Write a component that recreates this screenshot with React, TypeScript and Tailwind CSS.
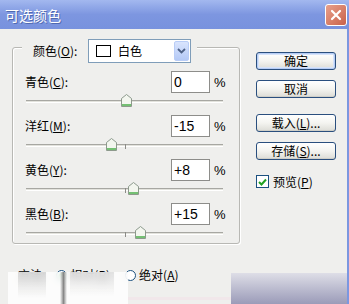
import React from 'react';

const cjk = "font-['Noto_Sans_CJK_SC','Noto_Sans',sans-serif]";

const Mn = ({ k }: { k: string }) => <span className="underline underline-offset-[1px]">{k}</span>;

const rows = [
  { name: '青色', key: 'C', value: 0 },
  { name: '洋红', key: 'M', value: -15 },
  { name: '黄色', key: 'Y', value: 8 },
  { name: '黑色', key: 'B', value: 15 },
];

const Thumb = () => (
  <svg width="11" height="13" viewBox="0 0 11 13" className="block">
    <path d="M0.5 4.5 L5.5 0.5 L10.5 4.5 L10.5 12.5 L0.5 12.5 Z" fill="#f3f6ef" stroke="#8d9a8c" />
    <path d="M1 11 H10" stroke="#4aae4a" strokeWidth="1.5" />
  </svg>
);

const Slider = ({ value }: { value: number }) => (
  <div className="relative ml-[13px] mr-[16px] mt-[7px] h-[3px] border-t border-[#a7a7a2] border-b border-b-white bg-[#e2e2dc]">
    <div className="absolute left-[99px] top-[-1px] w-px h-[5px] bg-[#8c8c88]" />
    <div className="absolute top-[-7px]" style={{ left: 100 + value * 0.98 - 5.5 }}>
      <Thumb />
    </div>
  </div>
);

const XpButton = ({ children, primary }: { children: React.ReactNode; primary?: boolean }) => (
  <div
    className={`w-[80px] h-[18px] rounded-[3px] border border-[#2a4f7e] bg-linear-to-b from-white via-[#f4f4f0] to-[#dcdcd6] flex items-center justify-center text-[12px] text-black leading-none ${
      primary ? 'shadow-[inset_0_0_0_1px_#b6cdf5,inset_0_0_0_2px_#d6e3f9]' : 'shadow-[inset_0_-1px_0_#cfcfc8]'
    }`}
  >
    {children}
  </div>
);

export default function App() {
  return (
    <div className={`relative w-[349px] h-[304px] overflow-hidden bg-[#efefed] flex flex-col ${cjk} text-[12px] text-black`}>
      {/* title bar */}
      <div className="h-[29px] flex items-center pl-[5px] pr-[2px] bg-linear-to-b from-[#a3b8ef] via-[#7d96e0] to-[#7892de]">
        <span className="text-[14px] text-white leading-none [text-shadow:1px_1px_0_#5069b0]">可选颜色</span>
        <div className="ml-auto w-[22px] h-[22px] rounded-[3px] border border-white bg-linear-to-br from-[#e7a08c] to-[#c9614a] flex items-center justify-center">
          <svg width="12" height="12" viewBox="0 0 12 12">
            <path d="M2 2 L10 10 M10 2 L2 10" stroke="#fff" strokeWidth="2.2" strokeLinecap="round" />
          </svg>
        </div>
      </div>

      <div className="flex flex-1 border-r-2 border-[#7c97e0]">
        {/* left column */}
        <div className="w-[240px] pl-[12px] pt-[18px] flex flex-col">
          <div className="h-[197px] border border-[#b8b8b4] rounded-[3px] shadow-[1px_1px_0_#fff,inset_1px_1px_0_#fff]">
            <div className="-mt-[9px] ml-[9px] w-fit h-[24px] flex items-center pl-[11px] pr-[6px] bg-[#efefed]">
              <span className="w-[55px] leading-none">颜色(<Mn k="O" />):</span>
              <div className="w-[103px] h-[24px] border border-[#7f9db9] bg-white flex items-center pl-[7px] pr-px">
                <div className="w-[15px] h-[12px] border border-black bg-white" />
                <span className="ml-[7px] leading-none">白色</span>
                <div className="ml-auto w-[15px] h-[20px] rounded-[2px] bg-linear-to-b from-[#d9e4fd] to-[#b4c9f6] border border-[#b9cdf7] flex items-center justify-center">
                  <svg width="9" height="6" viewBox="0 0 9 6">
                    <path d="M1 1 L4.5 4.5 L8 1" fill="none" stroke="#4d6185" strokeWidth="1.8" />
                  </svg>
                </div>
              </div>
            </div>

            <div className="mt-[8px] flex flex-col">
              {rows.map((r) => (
                <div key={r.key} className="h-[44px] flex flex-col">
                  <div className="h-[22px] flex items-center pl-[12px] pr-[12px]">
                    <span className="leading-none">
                      {r.name}(<Mn k={r.key} />):
                    </span>
                    <div className="ml-auto w-[39px] h-[22px] border border-[#8d8d8a] bg-white flex items-center pl-[2px] font-['Liberation_Sans',sans-serif] text-[14px] leading-none">
                      {r.value > 0 ? `+${r.value}` : `${r.value}`}
                    </div>
                    <span className="w-[17px] pl-[4px] text-[13px] leading-none font-['Liberation_Sans',sans-serif]">%</span>
                  </div>
                  <Slider value={r.value} />
                </div>
              ))}
            </div>
          </div>

          <div className="mt-[23px] h-[16px] flex items-center pl-[6px] leading-none">
            <span>方法:</span>
            <div className="ml-[11px] w-[11px] h-[11px] rounded-full border border-[#1c5180] bg-white flex items-center justify-center">
              <div className="w-[5px] h-[5px] rounded-full bg-[#2b9a2b]" />
            </div>
            <span className="ml-[3px]">相对(<Mn k="R" />)</span>
            <div className="ml-[15px] w-[11px] h-[11px] rounded-full border border-[#1c5180] bg-white" />
            <span className="ml-[3px]">绝对(<Mn k="A" />)</span>
          </div>
        </div>

        {/* right column */}
        <div className="pl-[16px] pt-[23px] flex flex-col">
          <XpButton primary>确定</XpButton>
          <div className="mt-[10px]">
            <XpButton>取消</XpButton>
          </div>
          <div className="mt-[16px]">
            <XpButton>
              载入(<Mn k="L" />)...
            </XpButton>
          </div>
          <div className="mt-[10px]">
            <XpButton>
              存储(<Mn k="S" />)...
            </XpButton>
          </div>
          <div className="mt-[15px] flex items-center">
            <div className="w-[13px] h-[13px] border border-[#1c5180] bg-white flex items-center justify-center">
              <svg width="9" height="8" viewBox="0 0 9 8">
                <path d="M1 4 L3.5 6.5 L8 1.5" fill="none" stroke="#21a121" strokeWidth="2" />
              </svg>
            </div>
            <span className="ml-[4px] leading-none">预览(<Mn k="P" />)</span>
          </div>
        </div>
      </div>

      {/* smeared regions over the bottom of the shot */}
      <div className="absolute left-[8px] top-[272px] w-[120px] h-[32px] bg-white/80 backdrop-blur-[3px] overflow-hidden">
        <div className="absolute left-[10px] top-0 w-[28px] h-[26px] bg-linear-to-b from-[#c8c8c8]/70 to-transparent" />
        <div className="absolute left-[52px] top-0 w-[7px] h-[32px] bg-linear-to-r from-transparent via-[#6a6a6a]/80 to-transparent" />
        <div className="absolute left-[62px] top-0 w-[44px] h-[24px] bg-linear-to-b from-[#d0d0d0]/60 to-transparent" />
      </div>
      <div className="absolute left-[128px] top-[297px] w-[103px] h-[3px] bg-[#f1e7ea]" />
      <div className="absolute left-[231px] top-[273px] w-[116px] h-[31px] bg-linear-to-b from-[#dedee7] to-[#9b9bb8]" />
    </div>
  );
}
